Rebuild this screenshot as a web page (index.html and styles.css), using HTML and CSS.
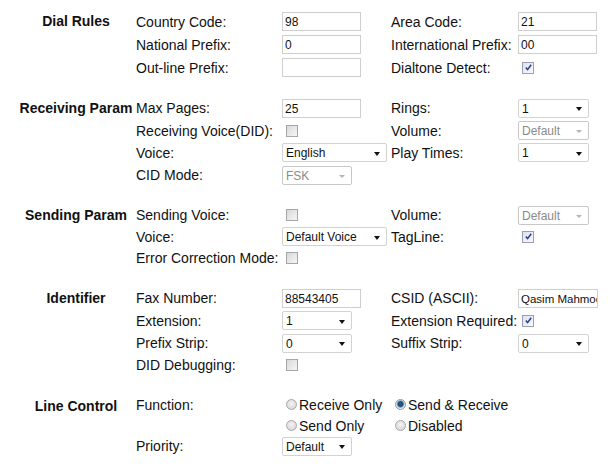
FILE: index.html
```html
<!DOCTYPE html>
<html>
<head>
<meta charset="utf-8">
<link rel="stylesheet" href="styles.css">
</head>
<body>
<div class="page">

<section class="sec r23">
  <div class="head">Dial Rules</div>
  <div class="body">
    <span class="lbl">Country Code:</span><span class="cell"><span class="txt">98</span></span>
    <span class="lbl">Area Code:</span><span class="cell"><span class="txt">21</span></span>
    <span class="lbl">National Prefix:</span><span class="cell"><span class="txt">0</span></span>
    <span class="lbl">International Prefix:</span><span class="cell"><span class="txt">00</span></span>
    <span class="lbl">Out-line Prefix:</span><span class="cell"><span class="txt"></span></span>
    <span class="lbl">Dialtone Detect:</span><span class="cell"><span class="cb on"><svg viewBox="0 0 9 9" width="9" height="9"><path d="M1.8 4.6 L3.6 6.6 L7.2 1.8" fill="none" stroke="#283c8c" stroke-width="1.5"/></svg></span></span>
  </div>
</section>

<section class="sec r22">
  <div class="head">Receiving Param</div>
  <div class="body">
    <span class="lbl">Max Pages:</span><span class="cell"><span class="txt">25</span></span>
    <span class="lbl">Rings:</span><span class="cell"><span class="sel w70"><span>1</span><i class="arr"></i></span></span>
    <span class="lbl">Receiving Voice(DID):</span><span class="cell"><span class="cb"></span></span>
    <span class="lbl">Volume:</span><span class="cell"><span class="sel w70 dis"><span>Default</span><i class="arr"></i></span></span>
    <span class="lbl">Voice:</span><span class="cell"><span class="sel w104"><span>English</span><i class="arr"></i></span></span>
    <span class="lbl">Play Times:</span><span class="cell"><span class="sel w70"><span>1</span><i class="arr"></i></span></span>
    <span class="lbl">CID Mode:</span><span class="cell"><span class="sel w69 dis"><span>FSK</span><i class="arr"></i></span></span>
  </div>
</section>

<section class="sec r21">
  <div class="head">Sending Param</div>
  <div class="body">
    <span class="lbl">Sending Voice:</span><span class="cell"><span class="cb"></span></span>
    <span class="lbl">Volume:</span><span class="cell"><span class="sel w70 dis"><span>Default</span><i class="arr"></i></span></span>
    <span class="lbl">Voice:</span><span class="cell"><span class="sel w104"><span>Default Voice</span><i class="arr"></i></span></span>
    <span class="lbl">TagLine:</span><span class="cell"><span class="cb on"><svg viewBox="0 0 9 9" width="9" height="9"><path d="M1.8 4.6 L3.6 6.6 L7.2 1.8" fill="none" stroke="#283c8c" stroke-width="1.5"/></svg></span></span>
    <span class="lbl">Error Correction Mode:</span><span class="cell"><span class="cb"></span></span>
  </div>
</section>

<section class="sec r22">
  <div class="head">Identifier</div>
  <div class="body">
    <span class="lbl">Fax Number:</span><span class="cell"><span class="txt">88543405</span></span>
    <span class="lbl">CSID (ASCII):</span><span class="cell"><span class="txt csid">Qasim Mahmood</span></span>
    <span class="lbl">Extension:</span><span class="cell"><span class="sel w69"><span>1</span><i class="arr"></i></span></span>
    <span class="lbl">Extension Required:</span><span class="cell"><span class="cb on"><svg viewBox="0 0 9 9" width="9" height="9"><path d="M1.8 4.6 L3.6 6.6 L7.2 1.8" fill="none" stroke="#283c8c" stroke-width="1.5"/></svg></span></span>
    <span class="lbl">Prefix Strip:</span><span class="cell"><span class="sel w69"><span>0</span><i class="arr"></i></span></span>
    <span class="lbl">Suffix Strip:</span><span class="cell"><span class="sel w70"><span>0</span><i class="arr"></i></span></span>
    <span class="lbl">DID Debugging:</span><span class="cell"><span class="cb"></span></span>
  </div>
</section>

<section class="sec r20">
  <div class="head">Line Control</div>
  <div class="body">
    <span class="lbl">Function:</span>
    <span class="cell"><span class="rad"></span><span class="rtxt">Receive Only</span></span>
    <span class="cell span2"><span class="rad on"></span><span class="rtxt">Send &amp; Receive</span></span>
    <span class="lbl"></span>
    <span class="cell"><span class="rad"></span><span class="rtxt">Send Only</span></span>
    <span class="cell span2"><span class="rad"></span><span class="rtxt">Disabled</span></span>
    <span class="lbl">Priority:</span><span class="cell"><span class="sel w69"><span>Default</span><i class="arr"></i></span></span>
  </div>
</section>

</div>
</body>
</html>
```

FILE: styles.css
```css
html, body {
  margin: 0;
  padding: 0;
  background: #fff;
}
body {
  font-family: "Liberation Sans", Arial, sans-serif;
  font-size: 14px;
  color: #111;
  width: 610px;
  height: 472px;
  overflow: hidden;
}
.page {
  padding-top: 10px;
}
.sec {
  display: flex;
  margin-bottom: 18px;
}
.head {
  width: 120px;
  margin-left: 16px;
  text-align: center;
  font-weight: bold;
  white-space: nowrap;
  line-height: 23px;
  height: 23px;
}
.body {
  display: grid;
  grid-template-columns: 146px 109px 127px 92px;
  align-items: center;
}
.r23 .body { grid-auto-rows: 23px; }
.r22 .body { grid-auto-rows: 22.4px; }
.r21 .body { grid-auto-rows: 21.5px; }
.r20 .body { grid-auto-rows: 20.7px; }
.r22 .head { line-height: 22px; height: 22px; }
.r21 .head { line-height: 21px; height: 21px; }
.r20 .head { line-height: 22px; height: 22px; }
.r20 { margin-top: 1px; }
.lbl {
  white-space: nowrap;
}
.cell {
  display: flex;
  align-items: center;
  white-space: nowrap;
}
.span2 { grid-column: span 2; }
.txt {
  box-sizing: border-box;
  width: 79px;
  height: 19px;
  border: 1px solid #cfcfcf;
  padding: 2px 2px 0 2px;
  font-size: 12px;
  line-height: 15px;
  overflow: hidden;
  color: #111;
  background: #fff;
}
.csid {
  width: 80px;
  text-overflow: clip;
  font-size: 11.5px;
}
.sel {
  box-sizing: border-box;
  height: 19px;
  border: 1px solid #d2d2d2;
  border-radius: 2px;
  padding: 1px 6px 0 3px;
  font-size: 12px;
  line-height: 16px;
  display: flex;
  align-items: center;
  justify-content: space-between;
  background: #fff;
  color: #111;
}
.sel.dis { color: #8a8a8a; border-color: #c8c8c8; }
.w70 { width: 71px; }
.w69 { width: 70px; }
.w104 { width: 105px; }
.arr {
  width: 0;
  height: 0;
  border-left: 3.5px solid transparent;
  border-right: 3.5px solid transparent;
  border-top: 4px solid #111;
  margin-top: 1px;
}
.dis .arr { border-top-color: #b4b4b4; border-left-width: 3px; border-right-width: 3px; border-top-width: 3px; }
.cb {
  box-sizing: border-box;
  width: 12px;
  height: 12px;
  margin-left: 4px;
  border: 1px solid #a6a6a6;
  background: linear-gradient(135deg, #d8d8d8, #f6f6f6);
  display: flex;
  align-items: center;
  justify-content: center;
}
.cb.on {
  background: linear-gradient(135deg, #dde2ec, #f8f9fc);
  border-color: #9aa0b0;
}
.rad {
  box-sizing: border-box;
  width: 11px;
  height: 11px;
  border-radius: 50%;
  margin-left: 4px;
  margin-right: 2px;
  border: 1px solid #a8a8a8;
  background: radial-gradient(circle at 50% 40%, #f4f4f4, #d0d0d0);
}
.rad.on {
  border-color: #8a9aa8;
  background: radial-gradient(circle at 50% 45%, #2a5e8a 0, #1c4a72 2.3px, #7fa0bb 3.3px, #e6ecf0 4.3px);
}
.rtxt {
  font-size: 14px;
}
```
